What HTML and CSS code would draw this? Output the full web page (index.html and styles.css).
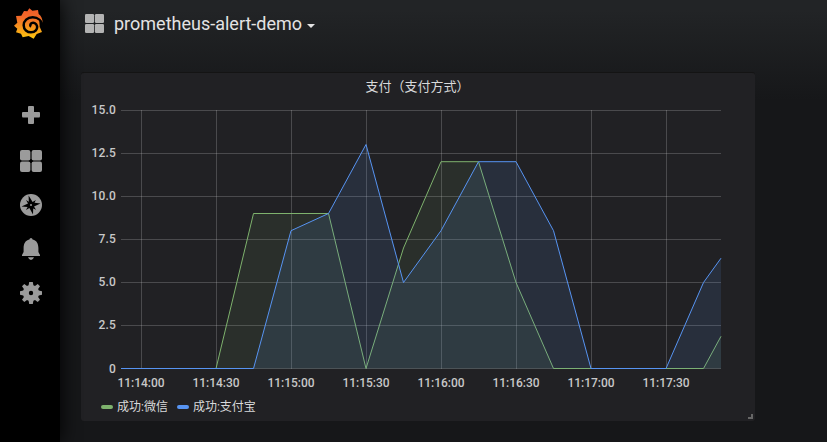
FILE: index.html
```html
<!DOCTYPE html>
<html lang="zh">
<head>
<meta charset="utf-8">
<title>prometheus-alert-demo</title>
<link rel="stylesheet" href="styles.css">
</head>
<body>
<nav class="sidebar">
  <svg class="logo" viewBox="42 24 87 93">
    <defs><linearGradient id="flame" x1="0" y1="0" x2="0" y2="1"><stop offset="0" stop-color="#f05a28"/><stop offset=".3" stop-color="#f26a29"/><stop offset="1" stop-color="#fcc60e"/></linearGradient></defs>
    <path fill="url(#flame)" d="M88 25L97 32L114 30L116 42Q127 50 128 68L122 74L121 85L126 96L110 102L101 116L86 108L68 112L63 101L48 97L52 86L42 77L52 68L48 48L64 47L72 33L82 34Z"/>
    <path class="logo-curl" d="M128 80C126 61 113 52 98 52C82 52 71 62 71 76C71 89 82 97 93 97C106 97 113 88 111 78C109 69 100 66 94 70C90 73 90 78 93 80"/>
    <path class="logo-cut" d="M118 62L130 73V90L119 82Z"/>
  </svg>
  <svg class="icon plus" viewBox="0 0 18 18"><path d="M7 0H11Q12 0 12 1V6H17Q18 6 18 7V10Q18 11.5 17 11.5H12V17Q12 18 11 18H7Q6 18 6 17V11.5H1Q0 11.5 0 10V7Q0 6 1 6H6V1Q6 0 7 0Z"/></svg>
  <svg class="icon" viewBox="0 0 22 22"><rect width="10.4" height="10.4" rx="2"/><rect x="11.6" width="10.4" height="10.4" rx="2"/><rect y="11.6" width="10.4" height="10.4" rx="2"/><rect x="11.6" y="11.6" width="10.4" height="10.4" rx="2"/></svg>
  <svg class="icon" viewBox="0 0 22 22"><circle cx="11" cy="11" r="11"/><path class="dark" d="M8.6 1.5L12.6 8L15.8 6L14.5 8.8L20.5 9.4L14 12.6L16 15.8L13.2 14.4L13 20.5L9.4 14L6 16L7.6 13L1.5 12.5L8 9.4L6 6L8.8 7.8Z"/><circle cx="11" cy="11" r="1"/></svg>
  <svg class="icon" viewBox="0 0 22 22"><path d="M11 0Q12.4 0 12.6 1.5C17 2.5 18.3 6 18.4 10V14L20 17V18H2V17L3.6 14V10C3.7 6 5 2.5 9.4 1.5Q9.6 0 11 0ZM8 19.2H14Q13 22 11 22T8 19.2Z"/></svg>
  <svg class="icon" viewBox="0 0 22 22"><path fill-rule="evenodd" d="M9.2 0H12.8L13.4 3.2L15 3.9L17.7 2L20 4.3L18.1 7L18.8 8.6L22 9.2V12.8L18.8 13.4L18.1 15L20 17.7L17.7 20L15 18.1L13.4 18.8L12.8 22H9.2L8.6 18.8L7 18.1L4.3 20L2 17.7L3.9 15L3.2 13.4L0 12.8V9.2L3.2 8.6L3.9 7L2 4.3L4.3 2L7 3.9L8.6 3.2ZM11 8.8A2.2 2.2 0 1 0 11 13.2A2.2 2.2 0 1 0 11 8.8Z"/></svg>
</nav>
<main class="page">
  <header class="title">
    <svg class="grid-icon" viewBox="0 0 19 19"><rect width="9.1" height="9.1" rx="1.3"/><rect x="9.9" width="9.1" height="9.1" rx="1.3"/><rect y="9.9" width="9.1" height="9.1" rx="1.3"/><rect x="9.9" y="9.9" width="9.1" height="9.1" rx="1.3"/></svg>
    <h1>prometheus-alert-demo</h1>
    <span class="caret"></span>
  </header>
  <section class="panel">
    <h2>支付（支付方式）</h2>
    <svg class="chart" width="674" height="296" viewBox="81 98 674 296">
      <path class="gridline" d="M121 110.5H721M121 153.5H721M121 196.5H721M121 239.5H721M121 282.5H721M121 325.5H721M121 368.5H721M141.5 110V369M216.5 110V369M291.5 110V369M366.5 110V369M441.5 110V369M516.5 110V369M591.5 110V369M666.5 110V369"/>
      <path class="green-area" d="M216 368.5L253.5 213.5H328.5L366 368.5L403.5 248L441 161.7H478.5L516 282.5L553.5 368.5H703.5L721 336.3V368.5Z"/>
      <path class="green-line" d="M121 368.5H216L253.5 213.5H328.5L366 368.5L403.5 248L441 161.7H478.5L516 282.5L553.5 368.5H703.5L721 336.3"/>
      <path class="blue-area" d="M253.5 368.5L291 230.7L328.5 213.5L366 144.5L403.5 282.5L441 230.7L478.5 161.7H516L553.5 230.7L591 368.5H666L703.5 282.5L721 258.2V368.5Z"/>
      <path class="blue-line" d="M121 368.5H253.5L291 230.7L328.5 213.5L366 144.5L403.5 282.5L441 230.7L478.5 161.7H516L553.5 230.7L591 368.5H666L703.5 282.5L721 258.2"/>
      <g class="y-labels"><text x="116" y="114">15.0</text><text x="116" y="157">12.5</text><text x="116" y="200">10.0</text><text x="116" y="243">7.5</text><text x="116" y="286">5.0</text><text x="116" y="329">2.5</text><text x="116" y="373">0</text></g>
      <g class="x-labels"><text x="141" y="387">11:14:00</text><text x="216" y="387">11:14:30</text><text x="291" y="387">11:15:00</text><text x="366" y="387">11:15:30</text><text x="441" y="387">11:16:00</text><text x="516" y="387">11:16:30</text><text x="591" y="387">11:17:00</text><text x="666" y="387">11:17:30</text></g>
    </svg>
    <div class="legend"><span class="key green"></span><span class="name first">成功:微信</span><span class="key blue"></span><span class="name">成功:支付宝</span></div>
    <span class="resize"></span>
  </section>
</main>
</body>
</html>
```
FILE: styles.css
```css
* { box-sizing: border-box; }
body { margin: 0; display: flex; height: 442px; overflow: hidden; background: #161719; color: #d8d9da; font-family: Roboto, "Noto Sans CJK SC", sans-serif; }
.sidebar { width: 60px; height: 442px; flex: none; background: #000; box-shadow: 0 0 20px #000; display: flex; flex-direction: column; align-items: center; padding: 8px 0 0 1px; z-index: 1; }
.logo { width: 29px; height: 31px; margin: 0 0 67px -4px; flex: none; }
.logo-curl { fill: none; stroke: #000; stroke-width: 7.5; }
.logo-cut { fill: #000; }
.icon { width: 22px; height: 22px; margin-bottom: 22px; fill: #9b9b9b; flex: none; }
.icon.plus { width: 18px; height: 18px; margin-bottom: 26px; }
.icon .dark { fill: #000; }
.page { flex: 1; background: linear-gradient(#222426 10px, #161719 100px); padding-left: 21px; }
.title { display: flex; align-items: center; height: 47px; margin-bottom: 25px; padding-left: 4px; }
.grid-icon { width: 19px; height: 19px; fill: #b3b3b3; }
h1 { font-size: 18px; font-weight: 400; line-height: 24px; margin: 0 5px 0 10px; color: #e3e3e3; }
.caret { border: 4px solid transparent; border-top-color: #e3e3e3; border-bottom: 0; margin-top: 5px; }
.panel { position: relative; width: 674px; height: 349px; background: #212124; border: 1px solid #141414; border-width: 1px 0 0; border-radius: 3px; }
h2 { height: 25px; margin: 0; font-size: 13px; font-weight: 400; line-height: 27px; text-align: center; padding-right: 1px; }
.chart { display: block; }
.gridline { stroke: #c8c8c8; stroke-opacity: .25; }
.green-area { fill: #7eb26d; fill-opacity: .1; }
.blue-area { fill: #5794f2; fill-opacity: .12; }
.green-line, .blue-line { fill: none; stroke: #7eb26d; stroke-width: 1; }
.blue-line { stroke: #5794f2; }
.chart text { font-size: 12px; font-weight: 500; fill: #c8c8c8; letter-spacing: .2px; }
.y-labels { text-anchor: end; }
.chart .x-labels text { text-anchor: middle; letter-spacing: 0; }
.legend { display: flex; align-items: center; height: 25px; padding-left: 20px; font-size: 12px; line-height: 18px; }
.key { width: 12px; height: 4px; border-radius: 2px; margin-right: 4px; }
.green { background: #7eb26d; }
.blue { background: #5794f2; }
.name { margin-top: 0; }
.name.first { margin-right: 9px; }
.resize { position: absolute; right: 2px; bottom: 2px; width: 5px; height: 5px; border: solid #666; border-width: 0 2px 2px 0; }
```
